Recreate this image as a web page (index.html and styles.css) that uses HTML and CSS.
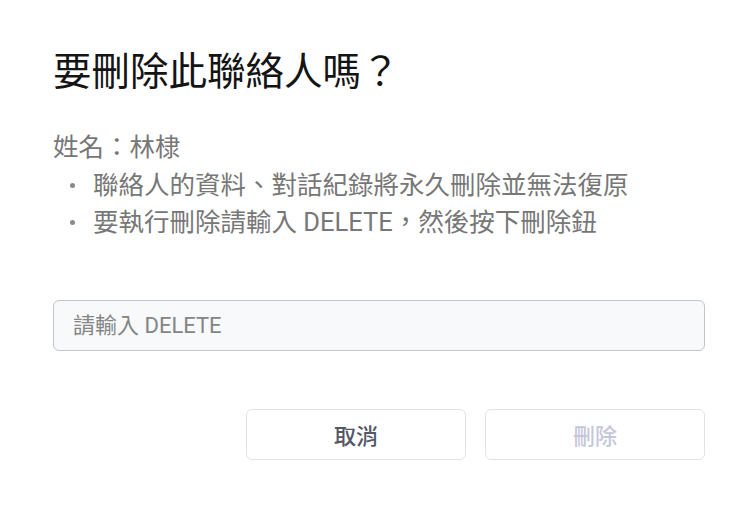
FILE: index.html
```html
<!DOCTYPE html>
<html lang="zh-Hant">
<head>
<meta charset="utf-8">
<title>要刪除此聯絡人嗎？</title>
<link rel="stylesheet" href="styles.css">
</head>
<body>
<div class="dialog">
  <h1 class="title">要刪除此聯絡人嗎？</h1>
  <div class="info">
    <p class="name">姓名：林棣</p>
    <ul class="notes">
      <li>聯絡人的資料、對話紀錄將永久刪除並無法復原</li>
      <li>要執行刪除請輸入 DELETE，然後按下刪除鈕</li>
    </ul>
  </div>
  <input class="confirm-input" type="text" placeholder="請輸入 DELETE">
  <div class="actions">
    <button class="btn btn-cancel">取消</button>
    <button class="btn btn-delete" disabled>刪除</button>
  </div>
</div>
</body>
</html>
```
FILE: styles.css
```css
* { box-sizing: border-box; }
html, body {
  margin: 0;
  background: #ffffff;
}
body {
  font-family: Roboto, "Noto Sans CJK TC", sans-serif;
}
.dialog {
  display: flex;
  flex-direction: column;
  padding: 46px 47px 0 53px;
}
.title {
  margin: 0;
  font-size: 38.5px;
  font-weight: 400;
  line-height: 52px;
  color: #141414;
}
.info {
  margin-top: 31px;
  color: #777777;
  font-size: 25.5px;
  line-height: 37.5px;
}
.name {
  margin: 0;
}
.notes {
  margin: 0;
  padding: 0;
  list-style: none;
}
.notes li {
  display: flex;
  align-items: center;
}
.notes li::before {
  content: "";
  width: 5px;
  height: 5px;
  border-radius: 50%;
  background: #8a8a8a;
  margin: 0 18px 0 17px;
  flex: none;
}
.confirm-input {
  margin-top: 58px;
  height: 51px;
  width: 100%;
  border: 1px solid #c2c4d0;
  border-radius: 6px;
  background: #f8f9fb;
  padding: 0 19px;
  font-family: Roboto, "Noto Sans CJK TC", sans-serif;
  font-size: 22px;
  color: #333;
  outline: none;
}
.confirm-input::placeholder {
  color: #858585;
}
.actions {
  margin-top: 58px;
  display: flex;
  justify-content: flex-end;
  gap: 19px;
}
.btn {
  width: 220px;
  height: 51px;
  border: 1px solid #e2e3e8;
  border-radius: 6px;
  background: #ffffff;
  font-family: Roboto, "Noto Sans CJK TC", sans-serif;
  font-size: 22px;
  font-weight: 500;
  padding: 0;
}
.btn-cancel {
  color: #545866;
}
.btn-delete {
  color: #c4c7dc;
}
```
